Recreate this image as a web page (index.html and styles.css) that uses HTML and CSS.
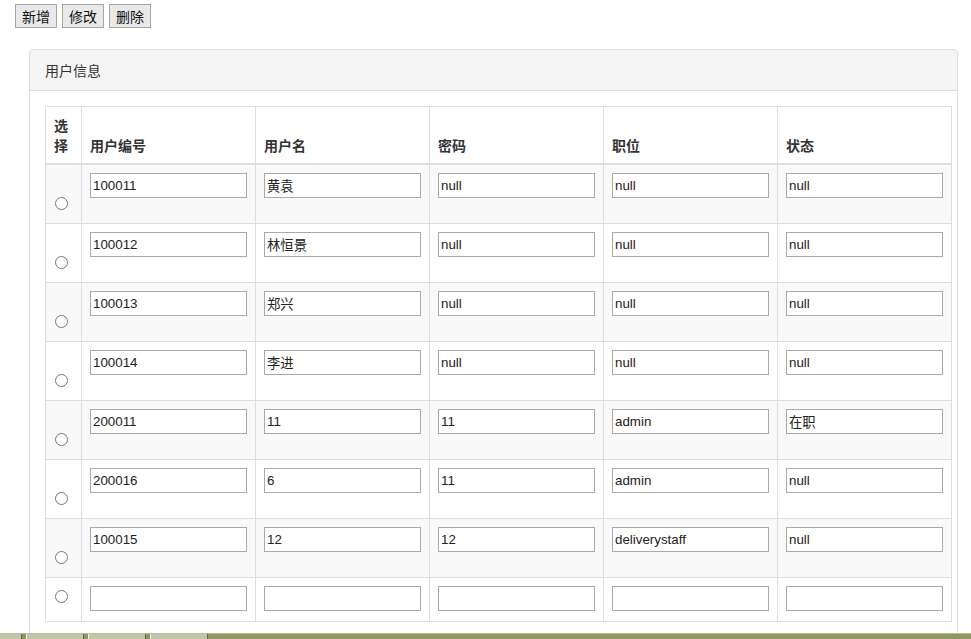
FILE: index.html
```html
<!DOCTYPE html>
<html lang="zh-CN">
<head>
<meta charset="utf-8">
<title>用户信息</title>
<link rel="stylesheet" href="styles.css">
</head>
<body>
<div class="toolbar">
  <button class="btn">新增</button>
  <button class="btn">修改</button>
  <button class="btn">删除</button>
</div>
<div class="panel">
  <div class="panel-heading">用户信息</div>
  <div class="panel-body">
    <table class="grid">
      <colgroup>
        <col class="c-sel"><col class="c-w"><col class="c-w"><col class="c-w"><col class="c-w"><col class="c-w">
      </colgroup>
      <thead>
        <tr><th>选择</th><th>用户编号</th><th>用户名</th><th>密码</th><th>职位</th><th>状态</th></tr>
      </thead>
      <tbody>
        <tr><td class="sel"><input type="radio" name="u"></td><td><input class="fld" value="100011"></td><td><input class="fld" value="黄袁"></td><td><input class="fld" value="null"></td><td><input class="fld" value="null"></td><td><input class="fld" value="null"></td></tr>
        <tr><td class="sel"><input type="radio" name="u"></td><td><input class="fld" value="100012"></td><td><input class="fld" value="林恒景"></td><td><input class="fld" value="null"></td><td><input class="fld" value="null"></td><td><input class="fld" value="null"></td></tr>
        <tr><td class="sel"><input type="radio" name="u"></td><td><input class="fld" value="100013"></td><td><input class="fld" value="郑兴"></td><td><input class="fld" value="null"></td><td><input class="fld" value="null"></td><td><input class="fld" value="null"></td></tr>
        <tr><td class="sel"><input type="radio" name="u"></td><td><input class="fld" value="100014"></td><td><input class="fld" value="李进"></td><td><input class="fld" value="null"></td><td><input class="fld" value="null"></td><td><input class="fld" value="null"></td></tr>
        <tr><td class="sel"><input type="radio" name="u"></td><td><input class="fld" value="200011"></td><td><input class="fld" value="11"></td><td><input class="fld" value="11"></td><td><input class="fld" value="admin"></td><td><input class="fld" value="在职"></td></tr>
        <tr><td class="sel"><input type="radio" name="u"></td><td><input class="fld" value="200016"></td><td><input class="fld" value="6"></td><td><input class="fld" value="11"></td><td><input class="fld" value="admin"></td><td><input class="fld" value="null"></td></tr>
        <tr><td class="sel"><input type="radio" name="u"></td><td><input class="fld" value="100015"></td><td><input class="fld" value="12"></td><td><input class="fld" value="12"></td><td><input class="fld" value="deliverystaff"></td><td><input class="fld" value="null"></td></tr>
        <tr class="new-row"><td class="sel"><input type="radio" name="u"></td><td><input class="fld" value=""></td><td><input class="fld" value=""></td><td><input class="fld" value=""></td><td><input class="fld" value=""></td><td><input class="fld" value=""></td></tr>
      </tbody>
    </table>
  </div>
</div>
<div class="tabbar">
  <span class="tab t0"></span><span class="tab t1"></span><span class="tab t1"></span><span class="tab t1"></span>
</div>
</body>
</html>
```
FILE: styles.css
```css
html, body {
  margin: 0;
  padding: 0;
  background: #fff;
  font-family: "Liberation Sans", "Noto Sans CJK SC", sans-serif;
  font-size: 14px;
  color: #333;
  overflow: hidden;
}

.toolbar {
  display: flex;
  gap: 5px;
  padding: 4px 0 0 15px;
  height: 24px;
}

.btn {
  box-sizing: border-box;
  height: 24px;
  margin: 0;
  padding: 0 6px;
  font-family: "Noto Sans CJK SC", sans-serif;
  font-size: 14px;
  line-height: 20px;
  color: #111;
  background: #e9e9e9;
  border: 1px solid #a6a6a6;
  border-radius: 0;
}

.panel {
  margin: 21px 0 0 29px;
  width: 929px;
  box-sizing: border-box;
  border: 1px solid #ddd;
  border-radius: 4px;
  background: #fff;
}

.panel-heading {
  height: 41px;
  box-sizing: border-box;
  padding: 10px 15px;
  line-height: 20px;
  font-family: "Noto Sans CJK SC", sans-serif;
  font-size: 14px;
  color: #333;
  background: #f5f5f5;
  border-bottom: 1px solid #ddd;
  border-radius: 3px 3px 0 0;
}

.panel-body {
  padding: 15px;
}

.grid {
  border-collapse: collapse;
  border: 1px solid #ddd;
  width: 907px;
  table-layout: fixed;
}

.c-sel { width: 36px; }
.c-w { width: 174px; }

.grid th {
  font-family: "Noto Sans CJK SC", sans-serif;
  font-weight: bold;
  font-size: 14px;
  line-height: 20px;
  text-align: left;
  vertical-align: bottom;
  padding: 8px;
  border: 1px solid #ddd;
  border-bottom: 2px solid #ddd;
  color: #333;
  word-break: break-all;
}

.grid td {
  padding: 8px;
  vertical-align: top;
  border: 1px solid #ddd;
  height: 59px;
  box-sizing: border-box;
}

.grid tbody tr:nth-child(odd) td {
  background: #f9f9f9;
}

.grid tbody tr.new-row td {
  background: #fff;
  height: 44px;
}

.grid td.sel {
  padding: 8px 0 0 9px;
}

.grid td.sel input {
  margin: 24px 0 0 0;
  width: 13px;
  height: 13px;
}

.grid tr.new-row td.sel input {
  margin-top: 4px;
}

.fld {
  display: block;
  box-sizing: border-box;
  width: 100%;
  height: 25px;
  margin: 0;
  padding: 1px 2px;
  border: 1px solid #a9a9a9;
  background: #fff;
  font-family: "Liberation Sans", "Noto Sans CJK SC", sans-serif;
  font-size: 13.33px;
  color: #222;
}

.tabbar {
  position: fixed;
  left: 0;
  right: 0;
  bottom: 0;
  height: 5px;
  background: #8d9760;
  border-top: 1px solid #b9bf95;
  display: flex;
  gap: 4px;
}

.tab {
  display: block;
  height: 5px;
  background: #c3c6a6;
  border-left: 1px solid #f2f2e6;
  border-right: 1px solid #5f6636;
  box-sizing: border-box;
}

.t0 { width: 22px; border-left: none; }
.t1 { width: 58px; }
```
